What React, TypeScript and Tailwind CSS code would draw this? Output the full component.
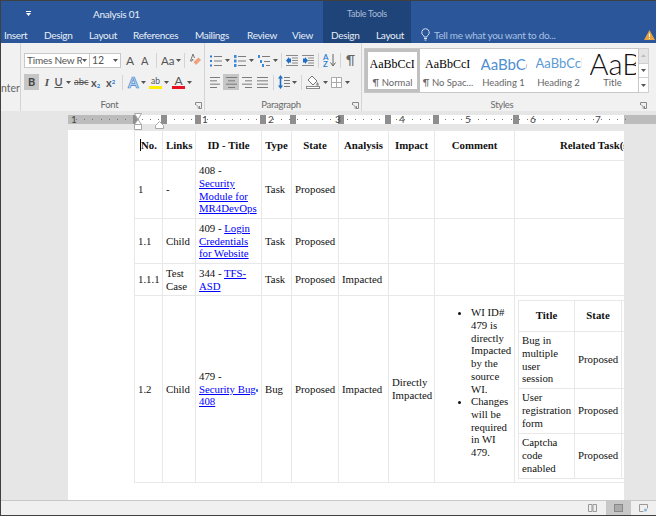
import React from 'react';

const UI_FONT = "font-['Lato','Open_Sans',sans-serif]";

const Caret = ({ className = '' }: { className?: string }) => (
  <svg width="5" height="3" viewBox="0 0 5 3" className={`shrink-0 ${className}`}>
    <path d="M0 0h5L2.5 3z" fill="#555" />
  </svg>
);

const Sep = ({ className = '' }: { className?: string }) => <div className={`w-px h-[15px] bg-[#d4d4d4] shrink-0 ${className}`} />;

const Launcher = () => (
  <svg width="7" height="7" viewBox="0 0 7 7" className="shrink-0">
    <path d="M0.5 3V0.5H6.5V6.5H4" fill="none" stroke="#8a8a8a" />
    <path d="M1 2.5L4.5 6M4.5 4v2h-2" fill="none" stroke="#777" strokeWidth="0.8" />
  </svg>
);

// grey text lines, used by the list and alignment buttons
const Lines = ({ rows, w = 11 }: { rows: [number, number][]; w?: number }) => (
  <svg width={w} height="11" viewBox={`0 0 ${w} 11`} className="shrink-0">
    {rows.map(([x, l], i) => (
      <rect key={i} x={x} y={i * (10 / Math.max(rows.length - 1, 1))} width={l} height="1" fill="#7b7b7b" />
    ))}
  </svg>
);

const ListIcon = ({ kind }: { kind: 'bullet' | 'number' | 'multi' }) => (
  <svg width="12" height="12" viewBox="0 0 12 12" className="shrink-0">
    {kind === 'bullet' && [1.5, 6, 10.5].map((y) => <rect key={y} x="0" y={y - 1} width="2" height="2" fill="#2b7cd3" />)}
    {kind === 'number' && [1.5, 6, 10.5].map((y) => <rect key={y} x="0" y={y - 1.5} width="2.5" height="3" fill="#3d8ad8" />)}
    {kind === 'multi' ? (
      <>
        <rect x="0" y="0" width="2" height="3" fill="#3d8ad8" />
        <rect x="2" y="5" width="2" height="3" fill="#3d8ad8" />
        <rect x="4" y="9" width="2" height="3" fill="#3d8ad8" />
        <rect x="4" y="1" width="8" height="1" fill="#7b7b7b" />
        <rect x="6" y="6" width="6" height="1" fill="#7b7b7b" />
        <rect x="8" y="10" width="4" height="1" fill="#7b7b7b" />
      </>
    ) : (
      [1, 5.5, 10].map((y) => <rect key={y} x="4" y={y} width="8" height="1" fill="#7b7b7b" />)
    )}
  </svg>
);

const IndentIcon = ({ right }: { right?: boolean }) => (
  <svg width="12" height="11" viewBox="0 0 12 11" className="shrink-0">
    {[0, 2.5, 5, 7.5, 10].map((y) => (
      <rect key={y} x={y === 0 || y === 10 ? 0 : 6} y={y} width={y === 0 || y === 10 ? 12 : 6} height="1" fill="#8a8a8a" />
    ))}
    <path d={right ? 'M1 3.5h2V2l3 3.5L3 9V7.5H1z' : 'M5 3.5H3V2L0 5.5 3 9V7.5h2z'} fill="#1e6fc4" />
  </svg>
);

const LineSpacing = () => (
  <svg width="12" height="14" viewBox="0 0 12 14" className="shrink-0">
    <path d="M2.5 0L5 3.5H3.3v7H5L2.5 14 0 10.5h1.700v-7H0z" fill="#1e6fc4" />
    {[2, 5, 8, 11].map((y) => <rect key={y} x="6" y={y} width="6" height="1" fill="#7b7b7b" />)}
  </svg>
);

const Bucket = () => (
  <svg width="14" height="14" viewBox="0 0 14 14" className="shrink-0">
    <path d="M6 1l5 5-4 4-5-5z" fill="#fff" stroke="#777" />
    <path d="M11.500 7c.8 1.200 1.200 2 1.200 2.600a1.200 1.200 0 0 1-2.400 0c0-.6.4-1.400 1.200-2.600z" fill="#888" />
    <rect x="0.500" y="11.500" width="13" height="2" fill="#fff" stroke="#888" />
  </svg>
);

const BorderGrid = () => (
  <svg width="11" height="11" viewBox="0 0 11 11" className="shrink-0">
    <path d="M.5.500h10v10H.5zM5.500.5v10M.5 5.500h10" fill="#fff" stroke="#a9a9a9" />
  </svg>
);

const SortIcon = () => (
  <div className="flex items-center shrink-0 w-[14px]">
    <div className="flex flex-col text-[8px] leading-[7px] text-[#2b7cd3] font-semibold w-[7px]">
      <span>A</span>
      <span>Z</span>
    </div>
    <svg width="6" height="13" viewBox="0 0 6 13">
      <path d="M3 0v11M0.500 8.500L3 12l2.500-3.500" fill="none" stroke="#666" />
    </svg>
  </div>
);

const Eraser = () => (
  <svg width="11" height="13" viewBox="0 0 11 13" className="shrink-0">
    <path d="M3 0l-2.500 7h1.500l.6-1.800 1 1M3 0l1.500 4" fill="none" stroke="#777" />
    <path d="M3.500 8l5-4.500 2.500 2.500-5 5z" fill="#f0a07c" />
  </svg>
);

const GroupLabel = ({ children, launcher = true }: { children: React.ReactNode; launcher?: boolean }) => (
  <div className="mt-auto h-[13px] flex items-center pr-[2px] pt-[1px]">
    <span className="flex-1 text-center text-[9.500px] tracking-[-0.3px] text-[#6a6a6a]">{children}</span>
    {launcher && <Launcher />}
  </div>
);

const FontGroup = () => (
  <div className="w-[184px] h-full border-r border-[#d4d4d4] flex flex-col pl-[3px] pt-[10px] text-[#555]">
    <div className="flex items-center h-[15px]">
      <div className="w-[66px] h-[15px] bg-white border border-[#c8c8c8] flex items-center justify-between pl-[2px] pr-[2px] overflow-hidden">
        <span className="text-[10px] tracking-[-0.2px] whitespace-nowrap overflow-hidden w-[55px]">Times New Roman</span>
        <Caret />
      </div>
      <div className="w-[31px] h-[15px] bg-white border border-l-0 border-[#c8c8c8] flex items-center justify-between pl-[2px] pr-[2px]">
        <span className="text-[10.500px]">12</span>
        <Caret />
      </div>
      <span className="w-[9px] ml-[5px] text-[12px] leading-none">A</span>
      <span className="w-[9px] ml-[6px] text-[11px] leading-none">A</span>
      <Sep className="ml-[6px]" />
      <span className="w-[14px] ml-[4px] text-[11.500px] leading-none">Aa</span>
      <Caret className="ml-[1px]" />
      <Sep className="ml-[3px]" />
      <div className="ml-[5px]"><Eraser /></div>
    </div>
    <div className="flex items-center h-[16px] mt-[6px]">
      <div className="w-[15px] h-[16px] bg-[#c6c6c6] flex items-center justify-center">
        <span className="font-bold text-[11px] text-[#444]">B</span>
      </div>
      <span className="w-[8px] ml-[4px] text-center italic font-bold text-[11px] font-['Liberation_Serif',serif]">I</span>
      <span className="w-[9px] ml-[3px] text-center underline text-[11px] font-semibold">U</span>
      <Caret className="ml-[3px]" />
      <span className="w-[15px] ml-[3px] text-[9.500px] line-through leading-none">abc</span>
      <span className="w-[10px] ml-[2px] text-[11px] font-bold leading-none">x<sub className="text-[6px] text-[#2b7cd3]">2</sub></span>
      <span className="w-[10px] ml-[5px] text-[11px] font-bold leading-none">x<sup className="text-[6px] text-[#2b7cd3]">2</sup></span>
      <Sep className="ml-[6px]" />
      <span className="w-[12px] ml-[5px] text-[15px] leading-none font-bold text-[#cfe2f6] [-webkit-text-stroke:0.7px_#3f87d0]">A</span>
      <Caret className="ml-[1px]" />
      <div className="ml-[3px] w-[13px] flex flex-col items-center">
        <span className="text-[8.500px] leading-[10px]">ab</span>
        <div className="w-[13px] h-[3px] bg-[#ffee00]" />
      </div>
      <Caret className="ml-[2px]" />
      <div className="ml-[3px] w-[13px] flex flex-col items-center">
        <span className="text-[12px] leading-[11px]">A</span>
        <div className="w-[13px] h-[3px] bg-[#e81123]" />
      </div>
      <Caret className="ml-[2px]" />
    </div>
    <GroupLabel>Font</GroupLabel>
  </div>
);

const ParagraphGroup = () => (
  <div className="w-[157px] h-full border-r border-[#d4d4d4] flex flex-col pl-[5px] pt-[10px] text-[#555]">
    <div className="flex items-center h-[15px]">
      <ListIcon kind="bullet" />
      <Caret className="ml-[3px]" />
      <div className="ml-[4px]"><ListIcon kind="number" /></div>
      <Caret className="ml-[3px]" />
      <div className="ml-[4px]"><ListIcon kind="multi" /></div>
      <Caret className="ml-[3px]" />
      <Sep className="ml-[3px]" />
      <div className="ml-[4px]"><IndentIcon /></div>
      <div className="ml-[4px]"><IndentIcon right /></div>
      <Sep className="ml-[4px]" />
      <div className="ml-[4px]"><SortIcon /></div>
      <Sep className="ml-[3px]" />
      <span className="ml-[5px] text-[13px] leading-none text-[#666]">¶</span>
    </div>
    <div className="flex items-center h-[16px] mt-[6px]">
      <Lines rows={[[0, 10], [0, 7], [0, 10], [0, 7]]} />
      <div className="w-[16px] h-[16px] ml-[2px] bg-[#c6c6c6] flex items-center justify-center">
        <Lines rows={[[0, 11], [2, 7], [0, 11], [2, 7]]} />
      </div>
      <div className="ml-[2px]"><Lines rows={[[1, 10], [4, 7], [1, 10], [4, 7]]} /></div>
      <div className="ml-[5px]"><Lines rows={[[0, 11], [0, 11], [0, 11], [0, 11]]} /></div>
      <Sep className="ml-[5px]" />
      <div className="ml-[4px]"><LineSpacing /></div>
      <Caret className="ml-[2px]" />
      <Sep className="ml-[4px]" />
      <div className="ml-[4px]"><Bucket /></div>
      <Caret className="ml-[3px]" />
      <div className="ml-[3px]"><BorderGrid /></div>
      <Caret className="ml-[3px]" />
    </div>
    <GroupLabel>Paragraph</GroupLabel>
  </div>
);

const styleItems = [
  { label: '¶ Normal', sample: 'AaBbCcI', cls: "font-['Liberation_Serif',serif] text-[12px] text-black", w: 'w-[55px]' },
  { label: '¶ No Spac...', sample: 'AaBbCcI', cls: "font-['Liberation_Serif',serif] text-[12px] text-black", w: 'w-[56px]' },
  { label: 'Heading 1', sample: 'AaBbCc', cls: 'text-[15px] text-[#4f8fd0]', w: 'w-[55px]' },
  { label: 'Heading 2', sample: 'AaBbCcD', cls: 'text-[13px] text-[#5b9bd5]', w: 'w-[55px]' },
  { label: 'Title', sample: 'AaB', cls: 'text-[29px] font-light text-[#111]', w: 'w-[53px]' },
];

const StylesGroup = () => (
  <div className="flex-1 h-full flex flex-col pl-[2px] pt-[5px] pr-[7px]">
    <div className="flex h-[45px]">
      <div className="w-[275px] bg-white border border-[#c8c8c8] flex">
        {styleItems.map((s, i) => (
          <div
            key={i}
            className={`${s.w} shrink-0 h-full flex flex-col items-center overflow-hidden ${i === 0 ? 'border-[3px] border-[#c0c0c0] pt-[1px]' : 'pt-[4px]'}`}
          >
            <div className={`h-[22px] flex items-center justify-start overflow-hidden w-[46px] whitespace-nowrap ${s.cls}`}>
              <span className="block">{s.sample}</span>
            </div>
            <span className="text-[9.500px] leading-[11px] mt-[2px] text-[#666] whitespace-nowrap">{s.label}</span>
          </div>
        ))}
      </div>
      <div className="w-[10px] flex flex-col">
        <div className="flex-1 bg-[#e4e4e4] border border-l-0 border-[#d0d0d0] flex items-center justify-center">
          <svg width="5" height="3" viewBox="0 0 5 3"><path d="M0 3h5L2.500 0z" fill="#c0c0c0" /></svg>
        </div>
        <div className="flex-1 bg-white border border-t-0 border-l-0 border-[#d0d0d0] flex items-center justify-center"><Caret /></div>
        <div className="flex-1 bg-white border border-t-0 border-l-0 border-[#d0d0d0] flex items-center justify-center"><Caret /></div>
      </div>
    </div>
    <GroupLabel>Styles</GroupLabel>
  </div>
);

const Ribbon = () => (
  <div className={`h-[68px] bg-[#f1f1f1] flex shrink-0 ${UI_FONT}`}>
    <div className="w-[20px] h-full border-r border-[#d4d4d4] overflow-hidden text-[10.500px] text-[#666] pt-[38px]">nter</div>
    <FontGroup />
    <ParagraphGroup />
    <StylesGroup />
  </div>
);

const columnMarks = [133, 161, 195, 260, 290, 338, 385, 433, 513];
const rulerNums: [number, string][] = [[71, '1'], [202, '1'], [268, '2'], [335, '3'], [399, '4'], [465, '5'], [530, '6'], [595, '7']];
const rulerDots = Array.from({ length: 68 }, (_, i) => 76 + i * 8.2);

// the ruler is a scale, so its marks sit at their measured x
const Ruler = () => (
  <div className="h-[19px] bg-[#e6e6e6] shrink-0 relative overflow-hidden">
    <div className="ml-[67px] mt-[4px] h-[9px] flex">
      <div className="w-[65px] bg-[#bcbcbc]" />
      <div className="w-[491px] bg-white" />
      <div className="flex-1 bg-[#bcbcbc]" />
    </div>
    {rulerDots.map((x, i) => (
      <div key={i} className="absolute top-[8px] w-px h-px bg-[#777]" style={{ left: x - 1 }} />
    ))}
    {columnMarks.map((x) => (
      <div key={x} className="absolute top-[4px] w-[6px] h-[9px] bg-[#8e8e8e]" style={{ left: x - 1 }} />
    ))}
    {rulerNums.map(([x, n], i) => (
      <span
        key={i}
        className={`absolute top-[3px] text-[10px] leading-[11px] text-[#444] ${UI_FONT}`}
        style={{ left: x - 1 }}
      >
        {n}
      </span>
    ))}
    <svg width="10" height="19" viewBox="0 0 10 19" className="absolute left-[132px] top-0">
      <path d="M1.500 2.500h7L5 8.500zM5 8.500l3.500 5h-7zM1.500 13.500h7v5h-7z" fill="#fff" stroke="#a8a8a8" />
    </svg>
    <svg width="9" height="8" viewBox="0 0 9 8" className="absolute left-[154px] top-[10px]">
      <path d="M4.500.500l4 4v3h-8v-3z" fill="#fff" stroke="#a8a8a8" />
    </svg>
  </div>
);

const Link = ({ children }: { children: React.ReactNode }) => <a className="text-[#0000ff] underline">{children}</a>;

const cell = 'border border-[#e8e8e8] px-[3px] py-0 align-middle';
const head = 'border border-[#e8e8e8] px-[3px] py-0 align-middle text-center font-bold';

const NestedTable = () => (
  <table className="table-fixed border-collapse w-[120px]">
    <colgroup>
      <col className="w-[56px]" />
      <col className="w-[47px]" />
      <col className="w-[17px]" />
    </colgroup>
    <tbody>
      <tr className="h-[31px]">
        <th className={head}>Title</th>
        <th className={head}>State</th>
        <td className={cell} />
      </tr>
      <tr className="h-[57px]">
        <td className={cell}>Bug in multiple user session</td>
        <td className={`${cell} whitespace-nowrap`}>Proposed</td>
        <td className={cell} />
      </tr>
      <tr className="h-[45px]">
        <td className={cell}>User registration form</td>
        <td className={`${cell} whitespace-nowrap`}>Proposed</td>
        <td className={cell} />
      </tr>
      <tr className="h-[45px]">
        <td className={cell}>Captcha code enabled</td>
        <td className={`${cell} whitespace-nowrap`}>Proposed</td>
        <td className={cell} />
      </tr>
    </tbody>
  </table>
);

const DocTable = () => (
  <table className="table-fixed border-collapse w-[542px] font-['Liberation_Serif',serif] text-[10.800px] leading-[12.700px] text-[#111]">
    <colgroup>
      {[28, 33, 66, 30, 47, 50, 46, 80, 162].map((w, i) => (
        <col key={i} style={{ width: w }} />
      ))}
    </colgroup>
    <tbody>
      <tr className="h-[30px]">
        <th className={head}><span className="border-l border-black">No.</span></th>
        <th className={head}>Links</th>
        <th className={head}>ID - Title</th>
        <th className={head}>Type</th>
        <th className={head}>State</th>
        <th className={head}>Analysis</th>
        <th className={head}>Impact</th>
        <th className={head}>Comment</th>
        <th className={head}>Related Task(s)</th>
      </tr>
      <tr className="h-[58px]">
        <td className={cell}>1</td>
        <td className={cell}>-</td>
        <td className={cell}>408 - <Link>Security Module for MR4DevOps</Link></td>
        <td className={cell}>Task</td>
        <td className={cell}>Proposed</td>
        <td className={cell} />
        <td className={cell} />
        <td className={cell} />
        <td className={cell} />
      </tr>
      <tr className="h-[45px]">
        <td className={cell}>1.1</td>
        <td className={cell}>Child</td>
        <td className={cell}>409 - <Link>Login Credentials for Website</Link></td>
        <td className={cell}>Task</td>
        <td className={cell}>Proposed</td>
        <td className={cell} />
        <td className={cell} />
        <td className={cell} />
        <td className={cell} />
      </tr>
      <tr className="h-[32px]">
        <td className={cell}>1.1.1</td>
        <td className={cell}>Test Case</td>
        <td className={cell}>344 - <Link>TFS-ASD</Link></td>
        <td className={cell}>Task</td>
        <td className={cell}>Proposed</td>
        <td className={cell}>Impacted</td>
        <td className={cell} />
        <td className={cell} />
        <td className={cell} />
      </tr>
      <tr className="h-[187px]">
        <td className={cell}>1.2</td>
        <td className={cell}>Child</td>
        <td className={cell}>
          479 - <Link><span className="whitespace-nowrap">Security Bug<span className="inline-block w-[2px] h-[3px] rounded-full bg-[#2b5fd8] mb-[1px]" /></span> 408</Link>
        </td>
        <td className={cell}>Bug</td>
        <td className={cell}>Proposed</td>
        <td className={cell}>Impacted</td>
        <td className={cell}>Directly Impacted</td>
        <td className={`${cell} pr-0`}>
          <ul className="list-disc pl-[33px] mb-[13px]">
            <li>WI ID# 479 is directly Impacted by the source WI.</li>
            <li>Changes will be required in WI 479.</li>
          </ul>
        </td>
        <td className={cell}>
          <NestedTable />
        </td>
      </tr>
    </tbody>
  </table>
);

const StatusBar = () => (
  <div className="h-[15px] shrink-0 bg-[#f0f0f0] border-t border-[#c8c8c8] flex items-stretch justify-end pr-[8px]">
    <svg width="9" height="8" viewBox="0 0 9 8" className="self-center mr-[9px]">
      <path d="M.5.500h3.500v7H.5zM5 .500h3.500v7H5z" fill="none" stroke="#999" />
    </svg>
    <div className="w-[25px] bg-[#c8c8c8] flex items-center justify-center">
      <svg width="9" height="8" viewBox="0 0 9 8">
        <rect x="0.500" y="0.500" width="8" height="7" fill="#aaa" stroke="#888" />
      </svg>
    </div>
    <svg width="9" height="8" viewBox="0 0 9 8" className="self-center ml-[8px]">
      <path d="M.5.500h8v4M.5.500v7h4" fill="none" stroke="#999" />
      <circle cx="6.500" cy="6" r="1.500" fill="#8db4dc" />
    </svg>
  </div>
);

export default function App() {
  return (
    <div className="w-[656px] h-[516px] overflow-hidden border-l border-t border-b border-[#404040] flex flex-col bg-[#e6e6e6]">
      <div className={`h-[42px] shrink-0 bg-[#2b579a] flex text-[10px] tracking-[-0.3px] leading-[14px] text-[#e8eef7] ${UI_FONT}`}>
        <div className="w-[322px] flex flex-col">
          <div className="h-[25px] flex items-center pl-[25px]">
            <svg width="5" height="5" viewBox="0 0 5 5" className="shrink-0">
              <rect width="5" height="1" fill="#fff" />
              <path d="M0 2h5L2.500 5z" fill="#fff" />
            </svg>
            <span className="ml-[62px]">Analysis 01</span>
          </div>
          <div className="flex-1 flex items-center pl-[3px] whitespace-nowrap">
            <span className="w-[40px]">Insert</span>
            <span className="w-[45px]">Design</span>
            <span className="w-[44px]">Layout</span>
            <span className="w-[62px]">References</span>
            <span className="w-[52px]">Mailings</span>
            <span className="w-[45px]">Review</span>
            <span>View</span>
          </div>
        </div>
        <div className="w-[88px] bg-[#1f4479] flex flex-col">
          <div className="h-[25px] flex items-center justify-center text-[9px] text-[#a9bcd8]">Table Tools</div>
          <div className="flex-1 flex items-center pl-[8px]">
            <span className="w-[45px]">Design</span>
            <span>Layout</span>
          </div>
        </div>
        <div className="flex-1 flex flex-col">
          <div className="h-[25px]" />
          <div className="flex-1 flex items-center pl-[10px] text-[#a9c0e2] whitespace-nowrap">
            <svg width="9" height="13" viewBox="0 0 9 13" className="shrink-0">
              <path d="M4.500.700a3.800 3.800 0 0 0-2 7c.4.300.5.800.5 1.300h3c0-.5.100-1 .5-1.300a3.800 3.800 0 0 0-2-7zM3 10.500h3M3.500 12h2" fill="none" stroke="#d5e1f2" />
            </svg>
            <span className="ml-[4px] w-[210px]">Tell me what you want to do...</span>
            <svg width="11" height="10" viewBox="0 0 11 10" className="shrink-0">
              <path d="M5.500 0L11 10H0z" fill="#e8a33d" />
              <rect x="5" y="3.500" width="1" height="3.500" fill="#fff" />
              <rect x="5" y="8" width="1" height="1" fill="#fff" />
            </svg>
          </div>
        </div>
      </div>
      <Ribbon />
      <Ruler />
      <div className="flex-1 min-h-0 pl-[67px] pr-[32px] overflow-hidden">
        <div className="h-full bg-white pl-[66px] overflow-hidden">
          <DocTable />
        </div>
      </div>
      <StatusBar />
    </div>
  );
}
